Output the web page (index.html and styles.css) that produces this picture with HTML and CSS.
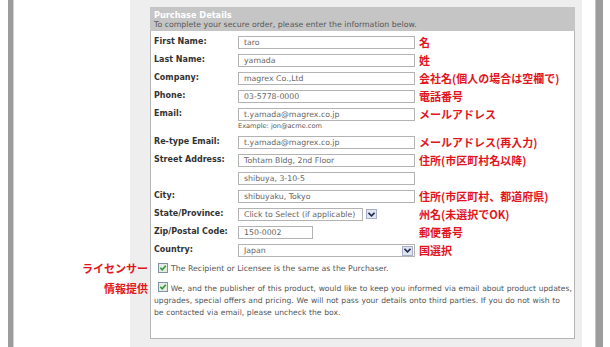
FILE: index.html
```html
<!DOCTYPE html>
<html lang="ja">
<head>
<meta charset="utf-8">
<title>Purchase Details</title>
<link rel="stylesheet" href="styles.css">
</head>
<body>
<div class="page">
  <div class="bar bar-left"></div>
  <div class="gutter-left"></div>
  <div class="content">
    <div class="panel">
      <div class="panel-head">
        <div class="title">Purchase Details</div>
        <div class="subtitle">To complete your secure order, please enter the information below.</div>
      </div>
      <div class="panel-body">
        <div class="row"><span class="label">First Name:</span><span class="field"><span class="input">taro</span></span><span class="note">名</span></div>
        <div class="row"><span class="label">Last Name:</span><span class="field"><span class="input">yamada</span></span><span class="note">姓</span></div>
        <div class="row"><span class="label">Company:</span><span class="field"><span class="input">magrex Co.,Ltd</span></span><span class="note">会社名(個人の場合は空欄で)</span></div>
        <div class="row"><span class="label">Phone:</span><span class="field"><span class="input">03-5778-0000</span></span><span class="note">電話番号</span></div>
        <div class="row row-email"><span class="label">Email:</span><span class="field"><span class="input">t.yamada@magrex.co.jp</span><span class="example">Example: jon@acme.com</span></span><span class="note">メールアドレス</span></div>
        <div class="row"><span class="label">Re-type Email:</span><span class="field"><span class="input">t.yamada@magrex.co.jp</span></span><span class="note">メールアドレス(再入力)</span></div>
        <div class="row"><span class="label">Street Address:</span><span class="field"><span class="input">Tohtam Bldg, 2nd Floor</span></span><span class="note">住所(市区町村名以降)</span></div>
        <div class="row"><span class="label"></span><span class="field"><span class="input">shibuya, 3-10-5</span></span><span class="note"></span></div>
        <div class="row"><span class="label">City:</span><span class="field"><span class="input">shibuyaku, Tokyo</span></span><span class="note">住所(市区町村、都道府県)</span></div>
        <div class="row"><span class="label">State/Province:</span><span class="field field-state"><span class="input select-state">Click to Select (if applicable)</span><span class="drop"><svg width="7" height="5" viewBox="0 0 7 5"><path d="M0.5 0.8 L3.5 3.8 L6.5 0.8" fill="none" stroke="#1f2a55" stroke-width="1.6"/></svg></span></span><span class="note">州名(未選択でOK)</span></div>
        <div class="row"><span class="label">Zip/Postal Code:</span><span class="field"><span class="input input-zip">150-0002</span></span><span class="note">郵便番号</span></div>
        <div class="row"><span class="label">Country:</span><span class="field"><span class="input select-country"><span class="select-text">Japan</span><span class="drop drop-in"><svg width="7" height="5" viewBox="0 0 7 5"><path d="M0.5 0.8 L3.5 3.8 L6.5 0.8" fill="none" stroke="#1f2a55" stroke-width="1.6"/></svg></span></span></span><span class="note">国選択</span></div>
        <div class="check-row">
          <span class="side-note">ライセンサー</span>
          <span class="box"><svg width="10" height="10" viewBox="0 0 10 10"><rect x="0.5" y="0.5" width="9" height="9" fill="#e4ece4" stroke="#7f95a3"/><path d="M2.3 4.8 L4.2 6.8 L7.8 2.8" fill="none" stroke="#2f9a2f" stroke-width="1.6"/></svg></span>
          <span class="check-text">The Recipient or Licensee is the same as the Purchaser.</span>
        </div>
        <p class="check-para">
          <span class="side-note side-note-2">情報提供</span><span class="box box-inline"><svg width="10" height="10" viewBox="0 0 10 10"><rect x="0.5" y="0.5" width="9" height="9" fill="#e4ece4" stroke="#7f95a3"/><path d="M2.3 4.8 L4.2 6.8 L7.8 2.8" fill="none" stroke="#2f9a2f" stroke-width="1.6"/></svg></span> We, and the publisher of this product, would like to keep you informed via email about product updates, upgrades, special offers and pricing. We will not pass your details onto third parties. If you do not wish to be&nbsp;contacted via email, please uncheck the box.
        </p>
      </div>
    </div>
  </div>
  <div class="gutter-right"></div>
  <div class="bar bar-right"></div>
</div>
</body>
</html>
```

FILE: styles.css
```css
* { box-sizing: border-box; }
html, body { margin: 0; padding: 0; background: #fff; }
body { font-family: "DejaVu Sans", Verdana, sans-serif; }

.page {
  display: flex;
  height: 347px;
  overflow: hidden;
}

.bar { background: #9c9c9c; }
.bar-left {
  margin-left: 8px;
  width: 6px;
  border-right: 1px solid #d0d0d0;
}
.gutter-left { width: 116px; }
.gutter-right { width: 13px; }
.bar-right {
  width: 8px;
  border-left: 1px solid #c4c4c4;
}

.content {
  width: 452px;
  background: #eeeeee;
  padding: 7px 7px 0 20px;
}

.panel { width: 425px; }

.panel-head {
  background: #c5c5c5;
  height: 24px;
  padding: 3px 4px 0;
}
.title {
  font-size: 8.2px;
  line-height: 10px;
  font-weight: bold;
  color: #fff;
}
.subtitle {
  font-size: 7.8px;
  line-height: 9px;
  color: #575757;
  white-space: nowrap;
}

.panel-body {
  position: relative;
  background: #fff;
  border: 1px solid #b4b4b4;
  border-top: none;
  height: 308px;
  padding: 2px 0 0 3px;
}

.row {
  display: grid;
  grid-template-columns: 84px 181px auto;
  height: 18px;
}
.row-email { height: 28px; }

.label {
  font-size: 8px;
  line-height: 18px;
  font-weight: bold;
  color: #333;
  white-space: nowrap;
}

.field {
  display: flex;
  flex-direction: column;
  align-items: flex-start;
  padding-top: 3px;
}
.field-state {
  flex-direction: row;
  gap: 3px;
}

.input {
  display: flex;
  align-items: center;
  width: 177px;
  height: 13px;
  border: 1px solid #b3b3b3;
  background: #fff;
  padding-left: 5px;
  font-size: 7.8px;
  color: #666;
  white-space: nowrap;
}
.input-zip { width: 75px; }
.select-state { width: 125px; }
.select-country {
  justify-content: space-between;
  padding-right: 1px;
}

.drop {
  display: flex;
  align-items: center;
  justify-content: center;
  width: 11px;
  height: 10px;
  margin-top: 1px;
  border: 1px solid #a7b0c4;
  background: #dfe4ee;
}
.drop-in { margin-top: 0; }

.example {
  margin-top: 1px;
  font-size: 6.6px;
  line-height: 8px;
  color: #555;
  white-space: nowrap;
}

.note {
  font-family: "Noto Sans CJK JP", sans-serif;
  font-weight: bold;
  font-size: 11px;
  line-height: 18px;
  color: #e3151c;
  white-space: nowrap;
}

.check-row {
  position: relative;
  display: flex;
  align-items: center;
  height: 18px;
  padding-left: 4px;
  gap: 3px;
}
.box { display: flex; }
.box-inline {
  display: inline-flex;
  vertical-align: -1px;
  margin-left: 4px;
}
.check-text {
  font-size: 7.8px;
  color: #555;
  white-space: nowrap;
}

.check-para {
  position: relative;
  margin: 5px 0 0;
  padding-right: 1px;
  font-size: 7.6px;
  word-spacing: 0.3px;
  line-height: 12px;
  color: #555;
}

.side-note {
  position: absolute;
  right: 100%;
  margin-right: 6px;
  font-family: "Noto Sans CJK JP", sans-serif;
  font-weight: bold;
  font-size: 11px;
  line-height: 18px;
  color: #e3151c;
  white-space: nowrap;
  word-spacing: 0;
}
.side-note-2 {
  top: -3px;
}
```
